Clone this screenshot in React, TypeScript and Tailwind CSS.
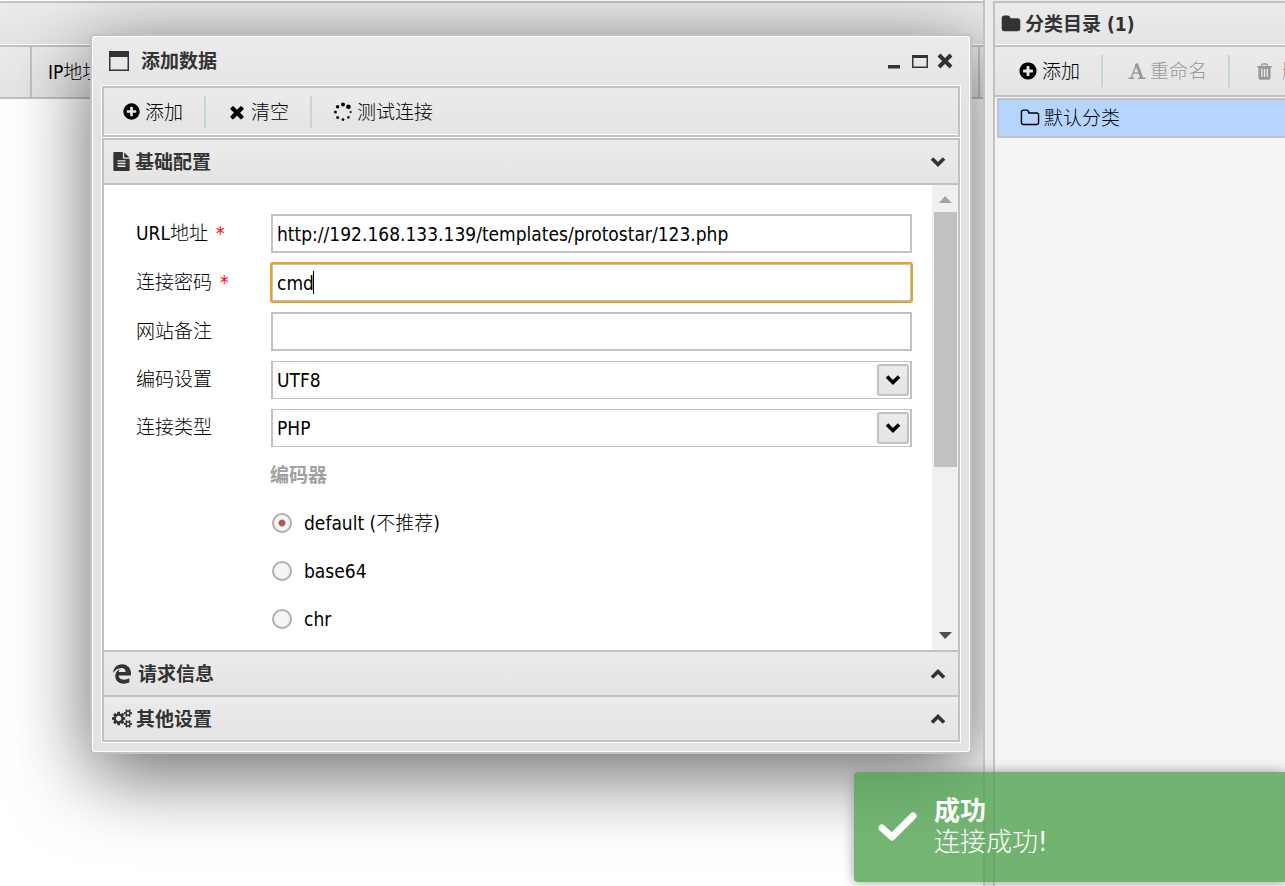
import { useState } from "react"
import type { ReactNode } from "react"
import clsx from "clsx"
import { FaEdgeLegacy } from "react-icons/fa"

const glyphs = {
  plusCircle:
    "M1344 960v-128q0-26-19-45t-45-19h-256v-256q0-26-19-45t-45-19h-128q-26 0-45 19t-19 45v256h-256q-26 0-45 19t-19 45v128q0 26 19 45t45 19h256v256q0 26 19 45t45 19h128q26 0 45-19t19-45v-256h256q26 0 45-19t19-45zm320-64q0 209-103 385.5t-279.5 279.5-385.5 103-385.5-103-279.5-279.5-103-385.5 103-385.5 279.5-279.5 385.5-103 385.5 103 279.5 279.5 103 385.5z",
  times:
    "M1490 1322q0 40-28 68l-136 136q-28 28-68 28t-68-28l-294-294-294 294q-28 28-68 28t-68-28l-136-136q-28-28-28-68t28-68l294-294-294-294q-28-28-28-68t28-68l136-136q28-28 68-28t68 28l294 294 294-294q28-28 68-28t68 28l136 136q28 28 28 68t-28 68l-294 294 294 294q28 28 28 68z",
  fileText:
    "M1596 476q14 14 28 36h-472v-472q22 14 36 28zm-476 164h544v1056q0 40-28 68t-68 28h-1344q-40 0-68-28t-28-68v-1600q0-40 28-68t68-28h800v544q0 40 28 68t68 28zm160 736v-64q0-14-9-23t-23-9h-704q-14 0-23 9t-9 23v64q0 14 9 23t23 9h704q14 0 23-9t9-23zm0-256v-64q0-14-9-23t-23-9h-704q-14 0-23 9t-9 23v64q0 14 9 23t23 9h704q14 0 23-9t9-23zm0-256v-64q0-14-9-23t-23-9h-704q-14 0-23 9t-9 23v64q0 14 9 23t23 9h704q14 0 23-9t9-23z",
  folder:
    "M1728 608v704q0 92-66 158t-158 66h-1216q-92 0-158-66t-66-158v-960q0-92 66-158t158-66h320q92 0 158 66t66 158v32h672q92 0 158 66t66 158z",
  folderOpen:
    "M1600 1312v-704q0-40-28-68t-68-28h-704q-40 0-68-28t-28-68v-64q0-40-28-68t-68-28h-320q-40 0-68 28t-28 68v960q0 40 28 68t68 28h1216q40 0 68-28t28-68zm128-704v704q0 92-66 158t-158 66h-1216q-92 0-158-66t-66-158v-960q0-92 66-158t158-66h320q92 0 158 66t66 158v32h672q92 0 158 66t66 158z",
  trash:
    "M704 1376v-704q0-14-9-23t-23-9h-64q-14 0-23 9t-9 23v704q0 14 9 23t23 9h64q14 0 23-9t9-23zm256 0v-704q0-14-9-23t-23-9h-64q-14 0-23 9t-9 23v704q0 14 9 23t23 9h64q14 0 23-9t9-23zm256 0v-704q0-14-9-23t-23-9h-64q-14 0-23 9t-9 23v704q0 14 9 23t23 9h64q14 0 23-9t9-23zm-544-992h448l-48-117q-7-9-17-11h-317q-10 2-17 11zm928 32v64q0 14-9 23t-23 9h-96v948q0 83-47 143.5t-113 60.5h-832q-66 0-113-58.5t-47-141.5v-952h-96q-14 0-23-9t-9-23v-64q0-14 9-23t23-9h309l70-167q15-37 54-63t79-26h320q40 0 79 26t54 63l70 167h309q14 0 23 9t9 23z",
}

const bar = "bg-linear-to-b from-[#ebebeb] to-[#e4e4e4]"

function Glyph({ name, className = "size-[19px]" }: { name: keyof typeof glyphs; className?: string }) {
  return (
    <svg viewBox="0 0 1792 1792" fill="currentColor" className={clsx("shrink-0", className)} aria-hidden="true">
      <path d={glyphs[name]} />
    </svg>
  )
}

function Cogs() {
  return (
    <svg viewBox="0 0 1920 1792" fill="currentColor" className="h-[19px] w-5 shrink-0" aria-hidden="true">
      <path d="M896 896q0-106-75-181t-181-75-181 75-75 181 75 181 181 75 181-75 75-181zm768 512q0-52-38-90t-90-38-90 38-38 90q0 53 37.5 90.5t90.5 37.5 90.5-37.5 37.5-90.5zm0-1024q0-52-38-90t-90-38-90 38-38 90q0 53 37.5 90.5t90.5 37.5 90.5-37.5 37.5-90.5zm-384 421v185q0 10-7 19.5t-16 10.5l-155 24q-11 35-32 76 34 48 90 115 7 11 7 20 0 12-7 19-23 30-82.5 89.5t-78.5 59.5q-11 0-21-7l-115-90q-37 19-77 31-11 108-23 155-7 24-30 24h-186q-11 0-20-7.5t-10-17.5l-23-153q-34-10-75-31l-118 89q-7 7-20 7-11 0-21-8-144-133-144-160 0-9 7-19 10-14 41-53t47-61q-23-44-35-82l-152-24q-10-1-17-9.5t-7-19.5v-185q0-10 7-19.5t16-10.5l155-24q11-35 32-76-34-48-90-115-7-11-7-20 0-12 7-20 22-30 82-89t79-59q11 0 21 7l115 90q34-18 77-32 11-108 23-154 7-24 30-24h186q11 0 20 7.5t10 17.5l23 153q34 10 75 31l118-89q8-7 20-7 11 0 21 8 144 133 144 160 0 8-7 19-12 16-42 54t-45 60q23 48 34 82l152 23q10 2 17 10.5t7 19.5zm640 533v140q0 16-149 31-12 27-30 52 51 113 51 138 0 4-4 7-122 71-124 71-8 0-46-47t-52-68q-20 2-30 2t-30-2q-14 21-52 68t-46 47q-2 0-124-71-4-3-4-7 0-25 51-138-18-25-30-52-149-15-149-31v-140q0-16 149-31 13-29 30-52-51-113-51-138 0-4 4-7 4-2 35-20t59-34 30-16q8 0 46 46.5t52 67.5q20-2 30-2t30 2q51-71 92-112l6-2q4 0 124 70 4 3 4 7 0 25-51 138 17 23 30 52 149 15 149 31zm0-1024v140q0 16-149 31-12 27-30 52 51 113 51 138 0 4-4 7-122 71-124 71-8 0-46-47t-52-68q-20 2-30 2t-30-2q-14 21-52 68t-46 47q-2 0-124-71-4-3-4-7 0-25 51-138-18-25-30-52-149-15-149-31v-140q0-16 149-31 13-29 30-52-51-113-51-138 0-4 4-7 4-2 35-20t59-34 30-16q8 0 46 46.5t52 67.5q20-2 30-2t30 2q51-71 92-112l6-2q4 0 124 70 4 3 4 7 0 25-51 138 17 23 30 52 149 15 149 31z" />
    </svg>
  )
}

function Spinner() {
  return (
    <svg viewBox="0 0 20 20" fill="currentColor" className="size-5 shrink-0" aria-hidden="true">
      <circle cx="10" cy="2.6" r="2" />
      <circle cx="15.4" cy="4.7" r="2.3" />
      <circle cx="17.6" cy="10" r="1.1" />
      <circle cx="15.4" cy="15.4" r="1.3" />
      <circle cx="10" cy="17.6" r="1.4" />
      <circle cx="4.6" cy="15.4" r="1.5" />
      <circle cx="2.4" cy="10" r="1.5" />
      <circle cx="4.6" cy="4.7" r="1.7" />
    </svg>
  )
}

// Rename icon, a slab letter shape
function FontIcon() {
  return (
    <svg viewBox="0 0 18 18" fill="none" stroke="currentColor" className="ml-1 size-[18px] shrink-0" aria-hidden="true">
      <path d="M8.5 2L3.2 16" strokeWidth="1.4" />
      <path d="M8.4 1.500L13.800 16" strokeWidth="3" />
      <path d="M5 11H12" strokeWidth="1.4" />
      <path d="M0.500 16.300H6.500M10 16.300H17.500" strokeWidth="1.6" />
    </svg>
  )
}

function Chevron({ up = false }: { up?: boolean }) {
  return (
    <svg viewBox="0 0 16 12" className="h-3 w-4 shrink-0" fill="none" stroke="currentColor" strokeWidth="3.6" aria-hidden="true">
      <path d={up ? "M2 9.5L8 3.5L14 9.5" : "M2 2.5L8 8.5L14 2.5"} />
    </svg>
  )
}

function ToolButton({ icon, children, disabled }: { icon: ReactNode; children: ReactNode; disabled?: boolean }) {
  return (
    <button type="button" disabled={disabled} className="flex shrink-0 items-center gap-1 whitespace-nowrap disabled:text-[#999]">
      {icon}
      <span className="font-light">{children}</span>
    </button>
  )
}

function Divider() {
  return <span className="h-8 w-0.5 shrink-0 bg-[#c5d4da]" />
}

function SectionHeader({ icon, title, open = false }: { icon: ReactNode; title: string; open?: boolean }) {
  return (
    <button
      type="button"
      aria-expanded={open}
      className={clsx("flex h-[45px] w-full items-center gap-1 border-b-2 border-[#c2c2c2] pr-3 pl-2 text-[#333]", bar)}
    >
      {icon}
      <span className="flex-1 text-left font-bold">{title}</span>
      <Chevron up={!open} />
    </button>
  )
}

function Field({ id, label, required, children }: { id: string; label: string; required?: boolean; children: ReactNode }) {
  return (
    <div className="flex items-center">
      <label htmlFor={id} className="w-[135px] shrink-0 pb-0.5 font-light">
        {label}
        {required && <span className="ml-2 text-[#f00]">*</span>}
      </label>
      {children}
    </div>
  )
}

const inputClass =
  "h-[39px] w-full min-w-0 flex-1 border-2 border-[#c2c2c2] bg-white px-1 focus:rounded-[2px] focus:outline-2 focus:-outline-offset-1 focus:outline-[#e2a42c]"

function SelectBox({ id, options }: { id: string; options: string[] }) {
  return (
    <div className="relative min-w-0 flex-1">
      <select id={id} className="block h-[38px] w-full appearance-none border-2 border-y border-[#c2c2c2] bg-white px-1">
        {options.map((option) => (
          <option key={option}>{option}</option>
        ))}
      </select>
      <span className={clsx("pointer-events-none absolute inset-y-[3px] right-[3px] flex w-8 items-center justify-center rounded-[3px] border-2 border-[#c2c2c2]", bar)}>
        <Chevron />
      </span>
    </div>
  )
}

const encoders = ["default (不推荐)", "base64", "chr"]

function AddDialog() {
  const [encoder, setEncoder] = useState(encoders[0])

  return (
    <div
      role="dialog"
      aria-label="添加数据"
      className="absolute top-[34px] left-[90px] w-[882px] rounded-[5px] border-2 border-[#c2c2c2] bg-white p-px shadow-[0_20px_80px_rgba(0,0,0,0.6)]"
    >
      <div className="rounded-[3px] bg-linear-to-b from-[#ebebeb] to-[#e3e3e3] to-10% px-2 pb-2">
        <div className="flex h-12 items-center text-[#333]">
          <svg viewBox="0 0 20 20" className="ml-2 size-5" aria-hidden="true">
            <path d="M0 0H20V20H0ZM1.5 6V18.5H18.5V6Z" fill="#333" fillRule="evenodd" />
          </svg>
          <h2 className="ml-3 flex-1 font-bold">添加数据</h2>
          <button type="button" aria-label="最小化" className="mr-3">
            <svg viewBox="0 0 12 16" className="h-4 w-3">
              <path d="M0 12H12V15.500H0Z" fill="#333" />
            </svg>
          </button>
          <button type="button" aria-label="最大化" className="mr-2">
            <svg viewBox="0 0 16 16" className="size-4">
              <path d="M0 2H16V15H0ZM1.500 5V13.500H14.500V5Z" fill="#333" fillRule="evenodd" />
            </svg>
          </button>
          <button type="button" aria-label="关闭" className="mr-[7px]">
            <svg viewBox="0 0 18 18" className="size-[18px]">
              <path d="M3 3L15 15M15 3L3 15" stroke="#333" strokeWidth="4" />
            </svg>
          </button>
        </div>

        <div className="border border-white bg-white">
          <div className={clsx("flex h-[51px] items-center gap-[21px] border-2 border-[#c2c2c2] pl-[18px] shadow-[inset_0_-1px_0_#fff]", bar)}>
            <ToolButton icon={<Glyph name="plusCircle" />}>添加</ToolButton>
            <Divider />
            <ToolButton icon={<Glyph name="times" className="size-5" />}>清空</ToolButton>
            <Divider />
            <ToolButton icon={<Spinner />}>测试连接</ToolButton>
          </div>

          <div className="mt-px border-x-2 border-t-2 border-[#c2c2c2]">
            <SectionHeader open icon={<Glyph name="fileText" />} title="基础配置" />

            <div className="flex h-[465px]">
              <form className="min-w-0 flex-1 overflow-hidden pt-[29px] pr-5 pl-8">
                <div className="flex flex-col gap-2.5">
                  <Field id="url" label="URL地址" required>
                    <input id="url" type="text" className={inputClass} defaultValue="http://192.168.133.139/templates/protostar/123.php" />
                  </Field>
                  <Field id="pwd" label="连接密码" required>
                    <div className="relative flex min-w-0 flex-1">
                      <input id="pwd" type="text" className={clsx("peer caret-transparent", inputClass)} defaultValue="cmd" autoFocus />
                      <span className="pointer-events-none absolute inset-y-2 left-[42px] hidden w-px bg-black peer-focus:block" />
                    </div>
                  </Field>
                  <Field id="note" label="网站备注">
                    <input id="note" type="text" className={inputClass} />
                  </Field>
                  <Field id="encode" label="编码设置">
                    <SelectBox id="encode" options={["UTF8", "GBK", "BIG5"]} />
                  </Field>
                  <Field id="type" label="连接类型">
                    <SelectBox id="type" options={["PHP", "ASP", "CUSTOM"]} />
                  </Field>
                </div>

                <fieldset className="mt-1 ml-[134px]">
                  <legend className="h-12 font-bold leading-[48px] text-[#a0a0a0]">编码器</legend>
                  {encoders.map((item) => (
                    <label key={item} className="flex h-12 items-center gap-3">
                      <input
                        type="radio"
                        name="encoder"
                        checked={encoder === item}
                        onChange={() => setEncoder(item)}
                        className="ml-0.5 size-5 appearance-none rounded-full border-2 border-[#b5adad] bg-[#f5f5f5] checked:bg-radial checked:from-[#a85a55] checked:from-25% checked:to-[#f5f5f5] checked:to-35%"
                      />
                      <span className="font-light">{item}</span>
                    </label>
                  ))}
                </fieldset>
              </form>

              <div className="flex w-[26px] flex-col items-center bg-[#f0f0f0]" aria-hidden="true">
                <svg viewBox="0 0 26 27" className="h-[27px] w-[26px]">
                  <path d="M7 18L13 11L20 18Z" fill="#a3a3a3" />
                </svg>
                <div className="h-[255px] w-[23px] bg-[#c1c1c1]" />
                <div className="flex-1" />
                <svg viewBox="0 0 26 27" className="h-[27px] w-[26px]">
                  <path d="M7 9L13 16L20 9Z" fill="#505050" />
                </svg>
              </div>
            </div>

            <div className="border-t-2 border-[#c2c2c2]">
              <SectionHeader icon={<FaEdgeLegacy className="mr-0.5 size-5" />} title="请求信息" />
              <SectionHeader icon={<Cogs />} title="其他设置" />
            </div>
          </div>
        </div>
      </div>
    </div>
  )
}

function Toast() {
  return (
    <div
      role="status"
      className="absolute right-0 bottom-1 flex h-[110px] w-[431px] items-center rounded-l-[4px] bg-[#51a351]/80 pl-6 text-white shadow-[0_0_12px_#999]"
    >
      <svg viewBox="0 0 40 32" className="h-8 w-10" fill="none" stroke="#fff" strokeWidth="7" strokeLinecap="round" strokeLinejoin="round" aria-hidden="true">
        <path d="M4 17L14 26L35 5" />
      </svg>
      <div className="ml-4 text-[26px] leading-[31px]">
        <p className="font-bold">成功</p>
        <p className="font-light">连接成功!</p>
      </div>
    </div>
  )
}

export default function App() {
  return (
    <div className="relative flex h-screen gap-2 overflow-hidden bg-[#ebebeb] pt-px font-['DejaVu_Sans_Condensed','Noto_Sans_CJK_SC',sans-serif] text-[19px] leading-6 text-black">
      <main className="relative -mt-px min-w-0 flex-1 overflow-hidden border-r-2 border-[#c2c2c2] bg-white pt-px">
        <div className={clsx("h-[46px] border-y-2 border-[#c2c2c2] shadow-[inset_0_-1px_0_#fff]", bar)} />
        <table className={clsx("w-full table-fixed text-left", bar)}>
          <thead>
            <tr className="h-[51px] border-b-2 border-[#c2c2c2]">
              <th className="w-[31px] border-r-2 border-[#c2c2c2]" aria-label="序号" />
              <th className="border-r-2 border-[#c2c2c2] pl-4 font-normal">
                IP<span className="font-light">地址</span>
              </th>
              <th className="w-[4px]" aria-label="更多" />
            </tr>
          </thead>
        </table>
        <AddDialog />
      </main>

      <aside className="flex w-[292px] shrink-0 flex-col border-t-2 border-l-2 border-[#c2c2c2] bg-[#f4f4f4]">
        <h2 className={clsx("flex h-[44px] items-center gap-1 border-b-2 border-[#c2c2c2] pl-1.5 font-bold text-[#333] shadow-[inset_0_-1px_0_#fff]", bar)}>
          <Glyph name="folder" className="size-5" />
          分类目录 (1)
        </h2>
        <div className={clsx("flex h-[50px] items-center gap-[21px] overflow-hidden border-b-2 border-[#c2c2c2] pl-[23px]", bar)}>
          <ToolButton icon={<Glyph name="plusCircle" className="size-5" />}>添加</ToolButton>
          <Divider />
          <ToolButton disabled icon={<FontIcon />}>
            重命名
          </ToolButton>
          <Divider />
          <ToolButton disabled icon={<Glyph name="trash" className="mx-1 size-[19px]" />}>
            删除
          </ToolButton>
        </div>
        <a href="#default" className="mt-px ml-0.5 flex h-10 items-center gap-1 border-y-2 border-l-2 border-[#c2c2c2] bg-[#b5d5ff] pl-[21px] font-light">
          <Glyph name="folderOpen" className="size-5" />
          默认分类
        </a>
      </aside>

      <Toast />
    </div>
  )
}
